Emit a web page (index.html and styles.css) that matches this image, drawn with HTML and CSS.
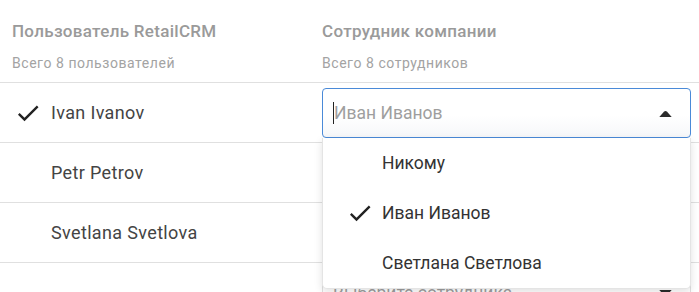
FILE: index.html
```html
<!DOCTYPE html>
<html lang="ru">
<head>
<meta charset="utf-8">
<link rel="stylesheet" href="styles.css">
</head>
<body>
<div class="table">
  <div class="row head">
    <div class="cell c1">
      <div class="title">Пользователь RetailCRM</div>
      <div class="sub">Всего 8 пользователей</div>
    </div>
    <div class="cell c2">
      <div class="title">Сотрудник компании</div>
      <div class="sub">Всего 8 сотрудников</div>
    </div>
  </div>

  <div class="row">
    <div class="cell c1 name">
      <span class="mark"><svg viewBox="0 0 24 24" width="24" height="24"><path d="M9 16.17L4.83 12l-1.42 1.41L9 19 21 7l-1.41-1.41z"/></svg></span>
      <span>Ivan Ivanov</span>
    </div>
    <div class="cell c2 selcell">
      <div class="select open">
        <span class="caret"></span>
        <span class="value">Иван Иванов</span>
        <svg class="arrow" viewBox="0 0 13 7" width="13" height="7"><path d="M0.3 7 L4.9 1.8 Q6.5 0 8.1 1.8 L12.7 7 Z"/></svg>
        <ul class="menu">
          <li class="opt">Никому</li>
          <li class="opt sel"><span class="mark"><svg viewBox="0 0 24 24" width="24" height="24"><path d="M9 16.17L4.83 12l-1.42 1.41L9 19 21 7l-1.41-1.41z"/></svg></span>Иван Иванов</li>
          <li class="opt">Светлана Светлова</li>
        </ul>
      </div>
    </div>
  </div>

  <div class="row">
    <div class="cell c1 name"><span class="mark"></span><span>Petr Petrov</span></div>
    <div class="cell c2 selcell"></div>
  </div>

  <div class="row">
    <div class="cell c1 name"><span class="mark"></span><span>Svetlana Svetlova</span></div>
    <div class="cell c2 selcell"></div>
  </div>

  <div class="row">
    <div class="cell c1 name"></div>
    <div class="cell c2 selcell">
      <div class="select">
        <span class="value">Выберите сотрудника</span>
        <svg class="arrow" viewBox="0 0 13 7" width="13" height="7"><path d="M0.3 0 L4.9 5.2 Q6.5 7 8.1 5.2 L12.7 0 Z"/></svg>
      </div>
    </div>
  </div>
</div>
</body>
</html>
```

FILE: styles.css
```css
* { box-sizing: border-box; }
html, body { margin: 0; padding: 0; background: #fff; }
body {
  font-family: Roboto, "Noto Sans", "Liberation Sans", sans-serif;
  color: #333;
  overflow: hidden;
  height: 292px;
}
.table { width: 699px; }
.row {
  display: grid;
  grid-template-columns: 322px 369px;
  height: 60px;
  border-bottom: 1px solid #e0e0e0;
}
.row.head { height: 83px; }
.cell { min-width: 0; }
.head .cell { padding-top: 21px; }
.c1 { padding-left: 12px; }
.title {
  font-size: 17px;
  font-weight: 500;
  color: #9a9a9a;
  line-height: 20px;
  letter-spacing: 0.3px;
}
.sub {
  font-size: 14px;
  color: #a3a3a3;
  line-height: 16px;
  margin-top: 14px;
  letter-spacing: 0.55px;
}
.name {
  display: flex;
  align-items: center;
  padding-left: 14px;
  font-size: 18px;
  letter-spacing: 0.35px;
  color: #444;
}
.mark {
  width: 28px;
  height: 28px;
  margin-right: 9px;
  flex: none;
}
.mark svg { width: 28px; height: 28px; display: block; fill: #222; }
.selcell { padding-top: 5px; }
.select {
  position: relative;
  height: 50px;
  border: 1px solid #e0e0e0;
  border-radius: 4px;
  display: flex;
  align-items: center;
  padding-left: 10px;
  padding-right: 18px;
  font-size: 17.5px;
  color: #9e9e9e;
  background: #fff;
}
.select.open {
  border-color: #4a8ad8;
  background: linear-gradient(#fff 55%, #f6f7f9);
}
.caret {
  width: 1px;
  height: 22px;
  background: #222;
  flex: none;
}
.value { flex: 1; }
.arrow { fill: #2b2b2b; flex: none; }
.menu {
  position: absolute;
  left: -1px;
  right: -1px;
  top: 49px;
  margin: 0;
  padding: 0;
  list-style: none;
  background: #fff;
  border: 1px solid #e4e4e4;
  border-top: none;
  border-radius: 0 0 5px 5px;
  box-shadow: 0 3px 8px rgba(0,0,0,0.12);
  z-index: 5;
}
.opt {
  height: 50px;
  display: flex;
  align-items: center;
  padding-left: 59px;
  font-size: 17.5px;
  color: #333;
}
.opt.sel { padding-left: 23px; }
.opt .mark { margin-right: 8px; }
```
